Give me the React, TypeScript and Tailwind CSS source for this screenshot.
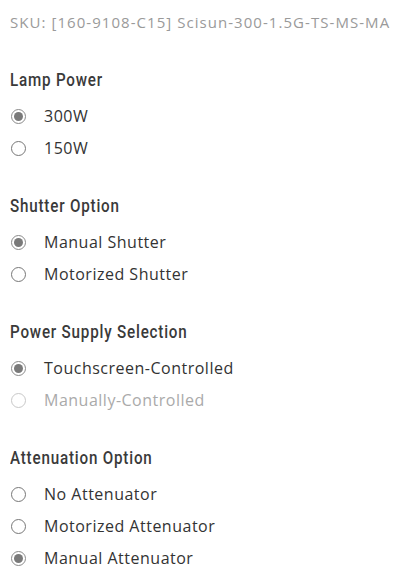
const BODY = "font-['Open_Sans',sans-serif]";
const HEAD = "font-['Roboto',sans-serif]";

type Opt = { label: string; checked?: boolean; disabled?: boolean };

const GROUPS: { title: string; options: Opt[] }[] = [
  { title: "Lamp Power", options: [{ label: "300W", checked: true }, { label: "150W" }] },
  { title: "Shutter Option", options: [{ label: "Manual Shutter", checked: true }, { label: "Motorized Shutter" }] },
  {
    title: "Power Supply Selection",
    options: [{ label: "Touchscreen-Controlled", checked: true }, { label: "Manually-Controlled", disabled: true }],
  },
  {
    title: "Attenuation Option",
    options: [{ label: "No Attenuator" }, { label: "Motorized Attenuator" }, { label: "Manual Attenuator", checked: true }],
  },
];

function Radio({ checked, disabled }: { checked?: boolean; disabled?: boolean }) {
  return (
    <span
      className={
        "flex h-[15px] w-[15px] shrink-0 items-center justify-center rounded-full border " +
        (disabled ? "border-[#c8c8c8]" : checked ? "border-[#8a8a8a]" : "border-[#777]")
      }
    >
      {checked && <span className="h-[9px] w-[9px] rounded-full bg-[#7a7a7a]" />}
    </span>
  );
}

export default function App() {
  return (
    <div className={`w-[411px] h-[577px] overflow-hidden bg-white px-[10px] pt-[12px] ${BODY}`}>
      <div className="whitespace-nowrap text-[15px] leading-[20px] tracking-[1.05px] text-[#9a9a9a]">
        SKU: [160-9108-C15] Scisun-300-1.5G-TS-MS-MA
      </div>

      <div className="mt-[38px] flex flex-col gap-[32px]">
        {GROUPS.map((g) => (
          <div key={g.title}>
            <h3
              className={`origin-left scale-x-[0.8] whitespace-nowrap text-[19px] font-medium leading-[20px] tracking-[1px] text-[#3a3a3a] ${HEAD}`}
            >
              {g.title}
            </h3>
            <div className="mt-[10px] flex flex-col">
              {g.options.map((o) => (
                <label key={o.label} className="flex h-[32px] items-center gap-[18px] pl-[1px]">
                  <Radio checked={o.checked} disabled={o.disabled} />
                  <span className={"text-[16px] tracking-[0.5px] " + (o.disabled ? "text-[#aaaaaa]" : "text-[#333]")}>
                    {o.label}
                  </span>
                </label>
              ))}
            </div>
          </div>
        ))}
      </div>
    </div>
  );
}
